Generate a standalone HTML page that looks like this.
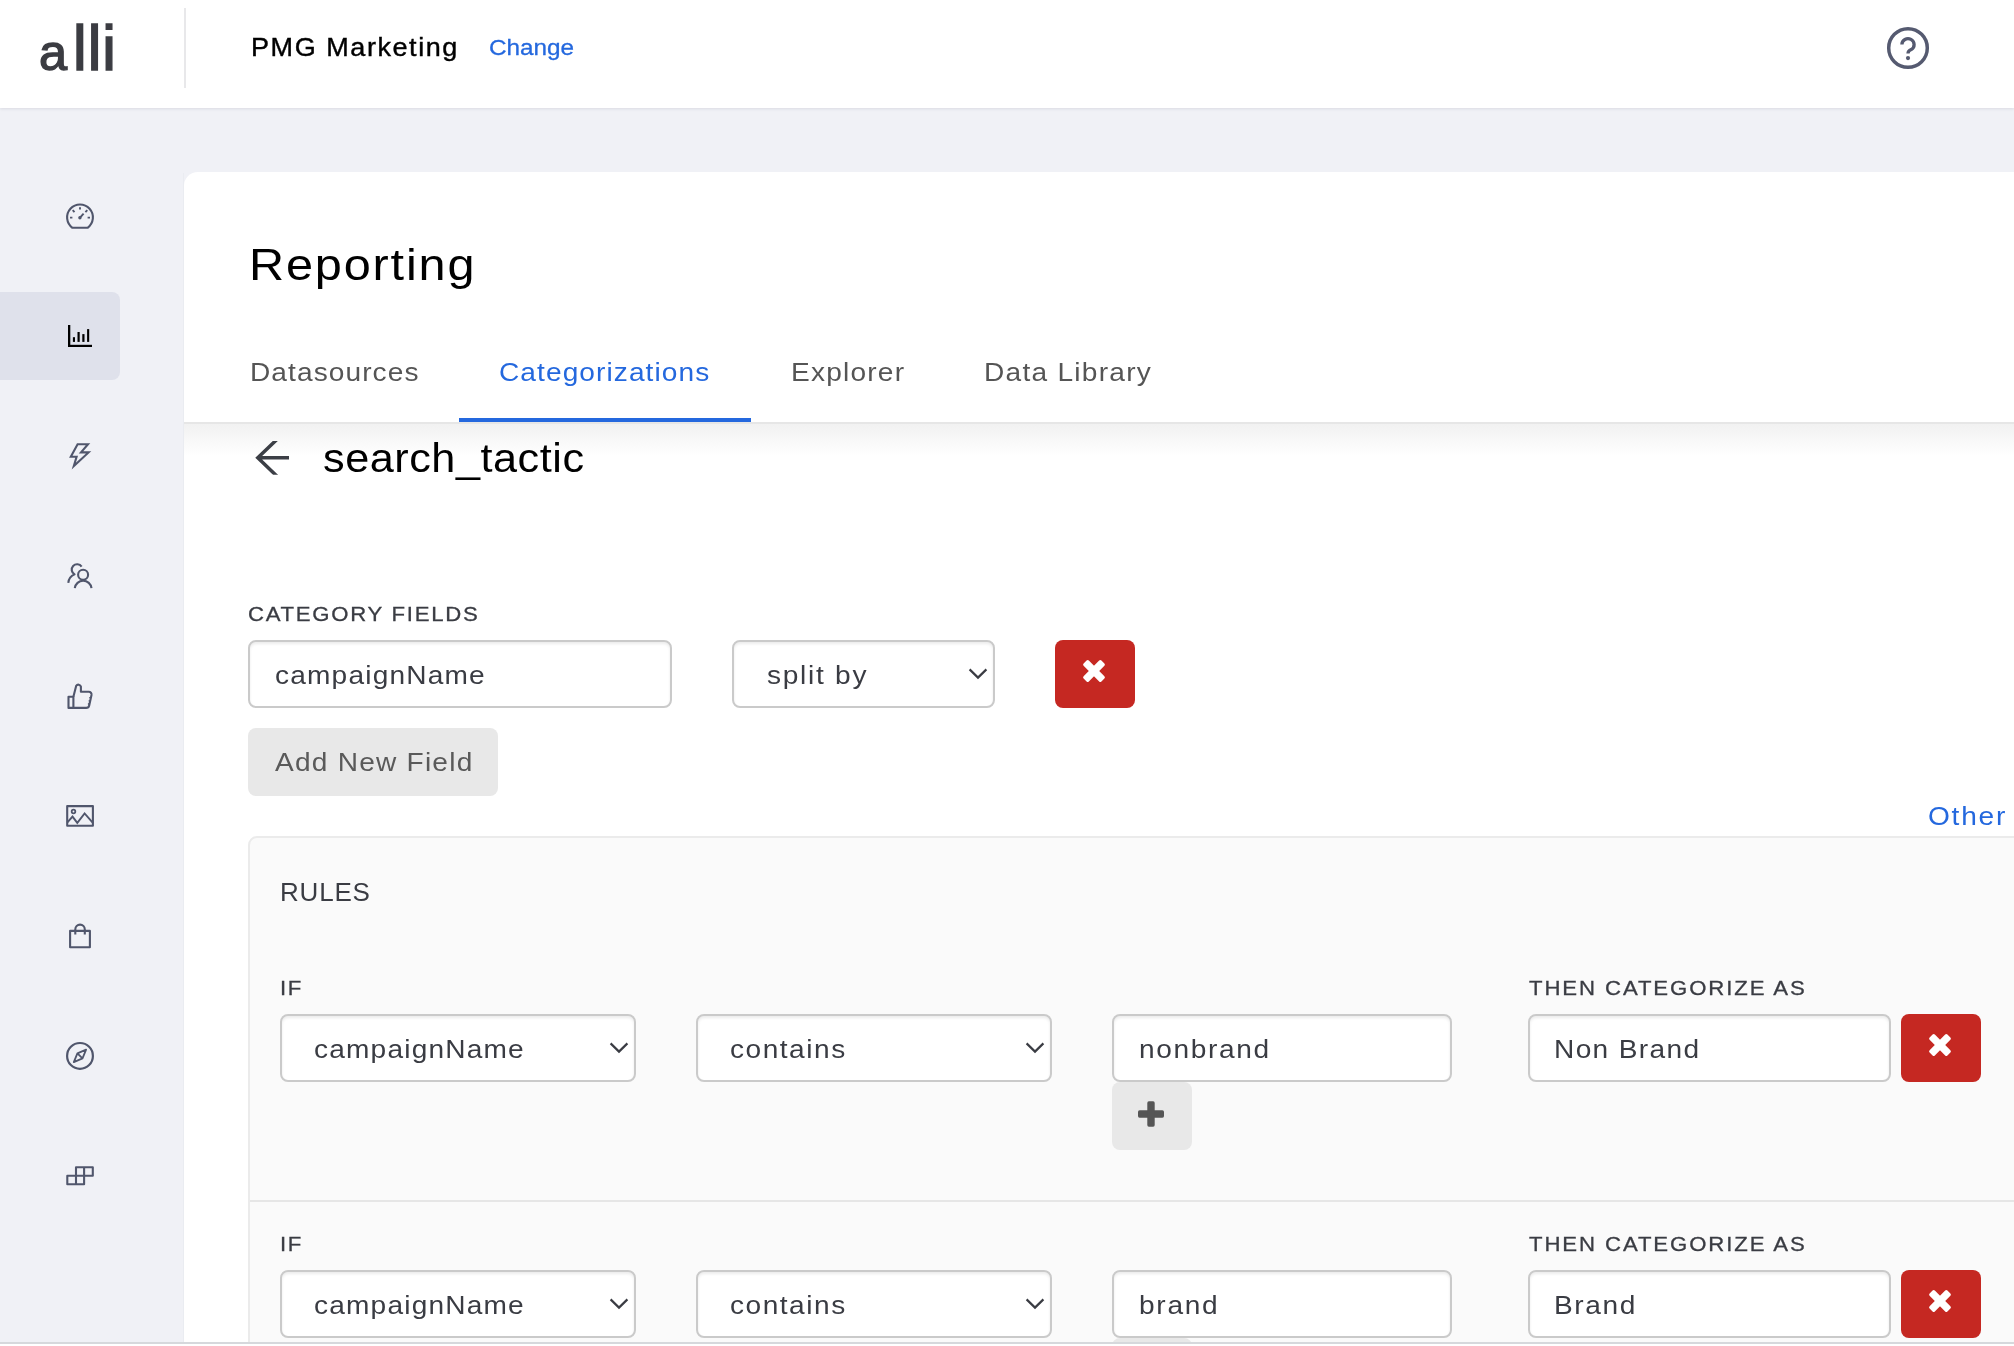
<!DOCTYPE html>
<html lang="en">
<head>
<meta charset="utf-8">
<title>Reporting - Categorizations</title>
<style>
*{box-sizing:border-box;margin:0;padding:0}
html,body{width:2014px;height:1346px;overflow:hidden;background:#fff}
body{font-family:"Liberation Sans",sans-serif;color:#3a3c43;position:relative}
.abs{position:absolute}
.t{position:absolute;white-space:nowrap;line-height:1;transform-origin:0 50%;will-change:transform}
#app{position:absolute;left:0;top:0;width:2014px;height:1342px;background:#f0f1f6;overflow:hidden}
#header{position:absolute;left:0;top:0;width:2014px;height:108px;background:#fff;box-shadow:0 1px 3px rgba(20,30,60,.10)}
#logo{left:39px;top:17px;font-size:63.5px;color:#3b3c42;-webkit-text-stroke:1.4px #3b3c42;letter-spacing:.5px}
#logo::first-letter{font-size:50.5px;margin-right:5.2px}
#hdiv{left:184px;top:8px;width:2px;height:80px;background:#e8e8ea}
#side-active{left:0;top:292px;width:120px;height:88px;background:#dfe1eb;border-radius:0 8px 8px 0}
#card{left:184px;top:172px;width:1900px;height:1300px;background:#fff;border-radius:14px 0 0 0}
#tabline{left:459px;top:418px;width:292px;height:4px;background:#2468de}
#tabborder{left:184px;top:422px;width:1830px;height:2px;background:#e6e6e6}
#tabshadow{left:184px;top:424px;width:1830px;height:32px;background:linear-gradient(#f1f1f1,#fff)}
.lbl{-webkit-text-stroke:.3px #3a3c43}
.inp{position:absolute;height:68px;border:2px solid #cacaca;border-radius:8px;background:#fff;box-shadow:inset 0 2px 3px rgba(0,0,0,.08)}
.inp .t{color:#3a3c43}
.chev{position:absolute;right:5px;top:26px}
.red{position:absolute;width:80px;height:68px;background:#c52822;border-radius:8px}
.red svg{position:absolute;left:25.2px;top:17.3px}
.grey{position:absolute;height:68px;background:#e8e8e8;border-radius:8px}
#panel{left:248px;top:836px;width:1800px;height:600px;background:#fafafa;border:2px solid #ebebeb;border-radius:9px 0 0 0}
#rowdiv{left:250px;top:1200px;width:1770px;height:2px;background:#e6e6e6}
#bottomline{left:0;top:1342px;width:2014px;height:2px;background:#d6d8dc}
svg{display:block;overflow:visible}
@media (max-width:1100px){html{zoom:.5}}
</style>
</head>
<body>

<div id="app">
  <div id="card" class="abs"></div>
  <div id="header">
    <div class="t" id="logo">alli</div>
    <div id="hdiv" class="abs"></div>
    <div class="t" style="left:251px;top:34.6px;font-size:25px;letter-spacing:1.45px;transform:scaleX(1.08);color:#000;-webkit-text-stroke:.4px #000;">PMG Marketing</div>
    <div class="t" style="left:488.5px;top:36.8px;font-size:22.5px;letter-spacing:0.0px;transform:scaleX(1.08);color:#2468de;-webkit-text-stroke:.3px #2468de;">Change</div>
  </div>
  <div class="abs" style="left:183px;top:173px;width:1px;height:1170px;background:#eaecf1"></div>
  <div id="side-active" class="abs"></div>
  <svg class="abs" style="left:0;top:0" width="2014" height="1342" viewBox="0 0 2014 1342" fill="none" stroke="#50566c" stroke-width="2.1" stroke-linejoin="round">
  <!-- dashboard -->
  <path d="M72.4 227.8 A12.9 12.9 0 1 1 87.6 227.8 Z"/>
  <path d="M80 207.2 V209.6 M70 217.6 H72.4 M87.6 217.6 H90 M72.7 210.2 L74.5 212.2 M87.3 210.2 L85.4 212.1" stroke-width="1.9"/>
  <path d="M80 217.7 L83.6 213.7" stroke-width="1.9"/>
  <circle cx="79.9" cy="217.8" r="1.7" fill="#50566c" stroke="none"/>
  <!-- bar chart (active) -->
  <g fill="#000" stroke="none">
    <rect x="68" y="325" width="2.3" height="22"/><rect x="68" y="344.8" width="24" height="2.2"/>
    <rect x="72.9" y="337.2" width="2.1" height="4.7"/><rect x="77.5" y="332" width="2.2" height="9.9"/>
    <rect x="82.3" y="334.1" width="2.2" height="7.8"/><rect x="87.1" y="329.1" width="2.1" height="12.8"/>
  </g>
  <!-- thunderbolt -->
  <path d="M77.6 444.2 H88 L81 452.4 H88.6 L73.8 466 L76.6 456.8 H70.8 Z" stroke-linejoin="miter"/>
  <!-- team -->
  <circle cx="83.1" cy="574.7" r="5"/>
  <path d="M74.8 588.2 A8.4 8.4 0 0 1 91.5 588.2"/>
  <path d="M81.63 566.66 A5.4 5.4 0 1 0 74.57 574.37 A10 10 0 0 0 68.3 582.8"/>
  <!-- like -->
  <rect x="68.5" y="696.7" width="4.9" height="11.2"/>
  <path d="M91 697.6 h-1.7 M90.3 700.8 h-1.7 M89.6 704 h-1.7" stroke-width="1.3"/>
  <path d="M73.4 696.7 L76.2 685.8 A2.6 2.6 0 0 1 80.9 686.6 V691.7 H88.8 A2.8 2.8 0 0 1 91.5 695 L89.2 705.4 A3.2 3.2 0 0 1 86 707.9 H73.4"/>
  <!-- picture -->
  <rect x="67.2" y="806.1" width="25.7" height="19.7"/>
  <circle cx="73.5" cy="811.5" r="1.8" stroke-width="1.8"/>
  <path d="M67.2 822.6 L72.5 816.6 L77.3 822.9 L84.6 813.4 L92.9 822.9" stroke-linejoin="miter" stroke-width="1.9"/>
  <!-- shopping -->
  <rect x="70.1" y="930.9" width="19.8" height="16.4"/>
  <path d="M75.3 934.6 V929.4 A4.75 4.75 0 0 1 84.8 929.4 V934.6"/>
  <!-- compass -->
  <circle cx="80" cy="1055.9" r="12.9" stroke-width="2.2"/>
  <path d="M86.1 1049.7 L77.4 1053.4 L73.8 1062.1 L82.5 1058.4 Z M77.4 1053.4 L82.5 1058.4" stroke-width="1.8"/>
  <!-- build -->
  <path d="M76 1167.3 H92.8 V1175.8 H76 Z M67.3 1175.8 H84.1 V1184.2 H67.3 Z M84.1 1167.3 V1175.8 M76 1175.8 V1184.2"/>
  <!-- help -->
  <g stroke="#555a70">
  <circle cx="1908" cy="48" r="19.3" stroke-width="3.5"/>
  <path d="M1901.9 44.6 a6.1 5.9 0 1 1 9.3 5 q-3.2 1.4 -3.2 3.8" stroke-width="3.3"/>
  <circle cx="1908" cy="58.1" r="2.1" fill="#555a70" stroke="none"/>
  </g>
</svg>


  <div class="t" style="left:249px;top:241.9px;font-size:45px;letter-spacing:1.7px;transform:scaleX(1.08);color:#000;">Reporting</div>
  <div class="t" style="left:250.3px;top:359.1px;font-size:26px;letter-spacing:1.0px;transform:scaleX(1.08);color:#555;">Datasources</div>
  <div class="t" style="left:499.3px;top:359.1px;font-size:26px;letter-spacing:1.0px;transform:scaleX(1.08);color:#2468de;">Categorizations</div>
  <div class="t" style="left:790.8px;top:359.1px;font-size:26px;letter-spacing:1.12px;transform:scaleX(1.08);color:#555;">Explorer</div>
  <div class="t" style="left:984.3px;top:359.1px;font-size:26px;letter-spacing:1.17px;transform:scaleX(1.08);color:#555;">Data Library</div>
  <div id="tabline" class="abs"></div>
  <div id="tabborder" class="abs"></div>
  <div id="tabshadow" class="abs"></div>

  <svg class="abs" style="left:250px;top:436px" width="44" height="44" viewBox="250 436 44 44"><clipPath id="ac"><rect x="250" y="440.9" width="44" height="33.8"/></clipPath><path clip-path="url(#ac)" d="M289 457.8 H258 M277.8 438.6 L257.8 457.8 L277.8 477" fill="none" stroke="#3c3f46" stroke-width="3.5"/></svg>
  <div class="t" style="left:322.7px;top:437.8px;font-size:40px;letter-spacing:0.5px;transform:scaleX(1.08);color:#000;">search_tactic</div>

  <div class="t lbl" style="left:248.1px;top:603.6px;font-size:20.5px;letter-spacing:1.6px;transform:scaleX(1.08);color:#3a3c43;">CATEGORY FIELDS</div>
  <div class="inp" style="left:248px;top:640px;width:424px"><div class="t" style="left:24.5px;top:19.7px;font-size:26px;letter-spacing:1.1px;transform:scaleX(1.08);">campaignName</div></div>
  <div class="inp" style="left:732px;top:640px;width:263px"><div class="t" style="left:32.5px;top:19.7px;font-size:26px;letter-spacing:1.6px;transform:scaleX(1.08);">split by</div><svg class="chev" width="20" height="12" viewBox="0 0 20 12"><path d="M1.6 1.4 L10 9.6 L18.4 1.4" fill="none" stroke="#3a3c43" stroke-width="2.2"/></svg></div>
  <div class="red" style="left:1055px;top:640px"><svg width="28" height="28" viewBox="-14 -14 28 28"><g fill="#fff"><rect x="-12.6" y="-3.7" width="25.2" height="7.4" rx="1.6" transform="rotate(45)"/><rect x="-12.6" y="-3.7" width="25.2" height="7.4" rx="1.6" transform="rotate(-45)"/></g></svg></div>
  <div class="grey" style="left:248px;top:728px;width:250px"><div class="t" style="left:26.8px;top:21.0px;font-size:26px;letter-spacing:1.13px;transform:scaleX(1.08);color:#5a5a5a;">Add New Field</div></div>
  <div class="t" style="left:1928px;top:803.2px;font-size:26px;letter-spacing:1.65px;transform:scaleX(1.08);color:#2468de;">Other</div>

  <div id="panel" class="abs"></div>
  <div class="t" style="left:280.3px;top:879.0px;font-size:26px;letter-spacing:0.8px;transform:scaleX(1.0);color:#3a3c43;">RULES</div>

  <div class="t lbl" style="left:280.4px;top:977.8px;font-size:20.5px;letter-spacing:1.5px;transform:scaleX(1.08);color:#3a3c43;">IF</div>
  <div class="inp" style="left:280px;top:1014px;width:356px"><div class="t" style="left:32.4px;top:19.7px;font-size:26px;letter-spacing:1.1px;transform:scaleX(1.08);">campaignName</div><svg class="chev" width="20" height="12" viewBox="0 0 20 12"><path d="M1.6 1.4 L10 9.6 L18.4 1.4" fill="none" stroke="#3a3c43" stroke-width="2.2"/></svg></div>
  <div class="inp" style="left:696px;top:1014px;width:356px"><div class="t" style="left:32.3px;top:19.7px;font-size:26px;letter-spacing:1.4px;transform:scaleX(1.08);">contains</div><svg class="chev" width="20" height="12" viewBox="0 0 20 12"><path d="M1.6 1.4 L10 9.6 L18.4 1.4" fill="none" stroke="#3a3c43" stroke-width="2.2"/></svg></div>
  <div class="inp" style="left:1112px;top:1014px;width:340px"><div class="t" style="left:24.7px;top:19.7px;font-size:26px;letter-spacing:1.5px;transform:scaleX(1.08);">nonbrand</div></div>
  <div class="t lbl" style="left:1528.7px;top:977.8px;font-size:20.5px;letter-spacing:1.77px;transform:scaleX(1.08);color:#3a3c43;">THEN CATEGORIZE AS</div>
  <div class="inp" style="left:1528px;top:1014px;width:363px"><div class="t" style="left:23.7px;top:19.7px;font-size:26px;letter-spacing:1.25px;transform:scaleX(1.08);">Non Brand</div></div>
  <div class="red" style="left:1901px;top:1014px"><svg width="28" height="28" viewBox="-14 -14 28 28"><g fill="#fff"><rect x="-12.6" y="-3.7" width="25.2" height="7.4" rx="1.6" transform="rotate(45)"/><rect x="-12.6" y="-3.7" width="25.2" height="7.4" rx="1.6" transform="rotate(-45)"/></g></svg></div>
  <div class="grey" style="left:1112px;top:1082px;width:80px"><svg style="position:absolute;left:25px;top:18.2px" width="28" height="28" viewBox="-14 -14 28 28"><g fill="#555"><rect x="-13" y="-3.7" width="26" height="7.4" rx="1.6"/><rect x="-3.7" y="-12.7" width="7.4" height="25.4" rx="1.6"/></g></svg></div>
  <div id="rowdiv" class="abs"></div>

  <div class="t lbl" style="left:280.4px;top:1233.8px;font-size:20.5px;letter-spacing:1.5px;transform:scaleX(1.08);color:#3a3c43;">IF</div>
  <div class="inp" style="left:280px;top:1270px;width:356px"><div class="t" style="left:32.4px;top:19.7px;font-size:26px;letter-spacing:1.1px;transform:scaleX(1.08);">campaignName</div><svg class="chev" width="20" height="12" viewBox="0 0 20 12"><path d="M1.6 1.4 L10 9.6 L18.4 1.4" fill="none" stroke="#3a3c43" stroke-width="2.2"/></svg></div>
  <div class="inp" style="left:696px;top:1270px;width:356px"><div class="t" style="left:32.3px;top:19.7px;font-size:26px;letter-spacing:1.4px;transform:scaleX(1.08);">contains</div><svg class="chev" width="20" height="12" viewBox="0 0 20 12"><path d="M1.6 1.4 L10 9.6 L18.4 1.4" fill="none" stroke="#3a3c43" stroke-width="2.2"/></svg></div>
  <div class="inp" style="left:1112px;top:1270px;width:340px"><div class="t" style="left:24.7px;top:19.7px;font-size:26px;letter-spacing:1.6px;transform:scaleX(1.08);">brand</div></div>
  <div class="t lbl" style="left:1528.7px;top:1233.8px;font-size:20.5px;letter-spacing:1.77px;transform:scaleX(1.08);color:#3a3c43;">THEN CATEGORIZE AS</div>
  <div class="inp" style="left:1528px;top:1270px;width:363px"><div class="t" style="left:23.7px;top:19.7px;font-size:26px;letter-spacing:1.5px;transform:scaleX(1.08);">Brand</div></div>
  <div class="red" style="left:1901px;top:1270px"><svg width="28" height="28" viewBox="-14 -14 28 28"><g fill="#fff"><rect x="-12.6" y="-3.7" width="25.2" height="7.4" rx="1.6" transform="rotate(45)"/><rect x="-12.6" y="-3.7" width="25.2" height="7.4" rx="1.6" transform="rotate(-45)"/></g></svg></div>
  <div class="grey" style="left:1112px;top:1338px;width:80px"><svg style="position:absolute;left:25px;top:18.2px" width="28" height="28" viewBox="-14 -14 28 28"><g fill="#555"><rect x="-13" y="-3.7" width="26" height="7.4" rx="1.6"/><rect x="-3.7" y="-12.7" width="7.4" height="25.4" rx="1.6"/></g></svg></div>
</div>
<div id="bottomline" class="abs"></div>

</body>
</html>
